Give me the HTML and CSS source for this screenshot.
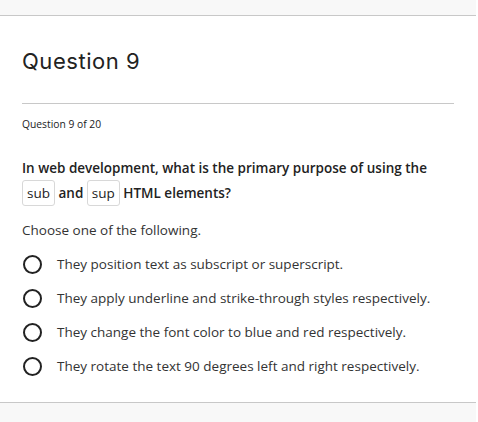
FILE: index.html
```html
<!DOCTYPE html>
<html>
<head>
<meta charset="utf-8">
<link rel="stylesheet" href="styles.css">
</head>
<body>
<div class="band band-top"></div>
<main class="content">
  <h1 class="title">Question 9</h1>
  <hr class="rule">
  <div class="counter">Question 9 of 20</div>
  <p class="question">In web development, what is the primary purpose of using the <code class="tag">sub</code> and <code class="tag">sup</code> HTML elements?</p>
  <p class="hint">Choose one of the following.</p>
  <ul class="options">
    <li class="option"><span class="radio"></span><span>They position text as subscript or superscript.</span></li>
    <li class="option"><span class="radio"></span><span>They apply underline and strike-through styles respectively.</span></li>
    <li class="option"><span class="radio"></span><span>They change the font color to blue and red respectively.</span></li>
    <li class="option"><span class="radio"></span><span>They rotate the text 90 degrees left and right respectively.</span></li>
  </ul>
</main>
<div class="band band-bottom"></div>
</body>
</html>
```

FILE: styles.css
```css
html, body {
  margin: 0;
  padding: 0;
  background: #fff;
}
body {
  font-family: "Open Sans", "Liberation Sans", sans-serif;
  color: #222;
  width: 476px;
}
.band {
  background: #f8f8f8;
}
.band-top {
  height: 15px;
  border-bottom: 1px solid #c8c8c8;
}
.band-bottom {
  height: 20px;
  border-top: 1px solid #c8c8c8;
}
.content {
  padding: 0 22px;
  height: 386px;
  box-sizing: border-box;
}
.title {
  font-family: Inter, "Liberation Sans", sans-serif;
  font-weight: 400;
  font-size: 22px;
  line-height: 28px;
  margin: 0;
  padding-top: 31px;
  letter-spacing: 0.55px;
}
.rule {
  border: 0;
  border-top: 1px solid #c8c8c8;
  margin: 28px 0 0 0;
  height: 0;
}
.counter {
  font-size: 10.3px;
  font-weight: 500;
  line-height: 14px;
  margin-top: 13px;
}
.question {
  font-size: 13.5px;
  font-weight: 600;
  line-height: 23px;
  margin: 26px 0 0 0;
}
.tag {
  font-family: "Open Sans", "Liberation Sans", sans-serif;
  font-weight: 400;
  font-size: 13.5px;
  display: inline-block;
  border: 1px solid #d8d8d8;
  border-radius: 3px;
  padding: 3px 4px;
  line-height: 18px;
  vertical-align: baseline;
}
.hint {
  font-size: 13.5px;
  line-height: 20px;
  margin: 14px 0 0 0;
  color: #333;
}
.options {
  list-style: none;
  margin: 14px 0 0 0;
  padding: 0;
  display: flex;
  flex-direction: column;
  gap: 14px;
}
.option {
  display: flex;
  align-items: center;
  gap: 15px;
  font-size: 13.5px;
  line-height: 20px;
  color: #333;
}
.radio {
  width: 15px;
  height: 15px;
  border: 2px solid #222;
  border-radius: 50%;
  flex: none;
  margin-left: 1px;
}
```
